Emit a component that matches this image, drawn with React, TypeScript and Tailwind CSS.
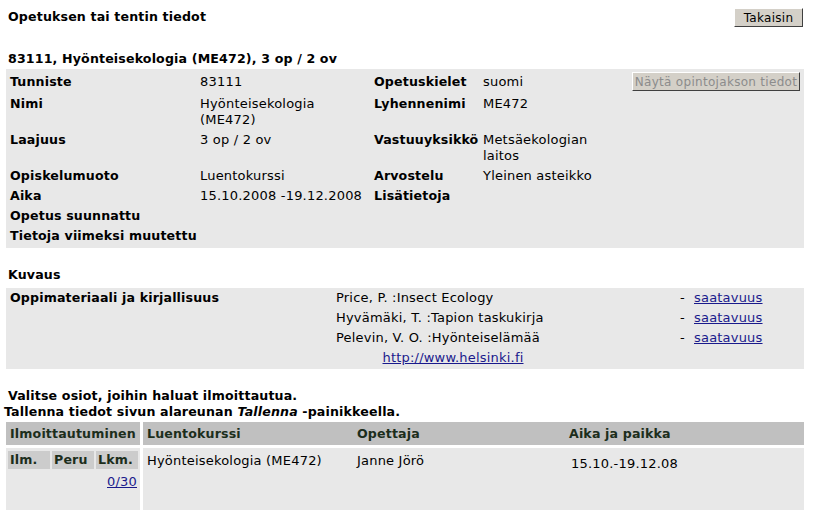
import type { ReactNode } from "react";

const font = { fontFamily: '"DejaVu Sans", Verdana, sans-serif' };

function Btn({ children, disabled }: { children: ReactNode; disabled?: boolean }) {
  return (
    <button
      className={
        "flex h-[19px] w-full items-center justify-center whitespace-nowrap border border-t-white border-l-white border-r-[#404040] border-b-[#404040] bg-[#d4d0c8] px-2 text-[12px] leading-none tracking-[0.3px] " +
        (disabled ? "text-[#8c8c8c]" : "text-black")
      }
      type="button"
    >
      {children}
    </button>
  );
}

const infoRows: { label: string; value: string; label2?: string; value2?: string; h: string }[] = [
  { label: "Nimi", value: "Hyönteisekologia (ME472)", label2: "Lyhennenimi", value2: "ME472", h: "h-[36px]" },
  { label: "Laajuus", value: "3 op / 2 ov", label2: "Vastuuyksikkö", value2: "Metsäekologian laitos", h: "h-[36px]" },
  { label: "Opiskelumuoto", value: "Luentokurssi", label2: "Arvostelu", value2: "Yleinen asteikko", h: "h-[20px]" },
  { label: "Aika", value: "15.10.2008 -19.12.2008", label2: "Lisätietoja", value2: "", h: "h-[20px]" },
  { label: "Opetus suunnattu", value: "", h: "h-[20px]" },
  { label: "Tietoja viimeksi muutettu", value: "", h: "h-[20px]" },
];

const books = [
  "Price, P. :Insect Ecology",
  "Hyvämäki, T. :Tapion taskukirja",
  "Pelevin, V. O. :Hyönteiselämää",
];

const bold = "font-bold text-[12.6px] tracking-[0.15px]";

export default function App() {
  return (
    <div className="min-h-[518px] w-[813px] bg-white text-[13px] leading-4 tracking-[0.2px] text-black" style={font}>
      {/* page title + back */}
      <div className="flex items-start justify-between pl-2 pr-[10px] pt-2">
        <h1 className={"pt-px " + bold}>Opetuksen tai tentin tiedot</h1>
        <div className="w-[69px]">
          <Btn>Takaisin</Btn>
        </div>
      </div>

      <h2 className={"mt-[24px] pl-2 " + bold}>83111, Hyönteisekologia (ME472), 3 op / 2 ov</h2>

      {/* basic info panel */}
      <div className="ml-[6px] mr-[9px] mt-[2px] bg-[#e8e8e8] pb-[2px] pl-1">
        <div className="grid h-[25px] grid-cols-[190px_174px_109px_149px_1fr] items-center">
          <span className={bold}>Tunniste</span>
          <span>83111</span>
          <span className={bold}>Opetuskielet</span>
          <span>suomi</span>
          <div className="w-[168px]">
            <Btn disabled>Näytä opintojakson tiedot</Btn>
          </div>
        </div>
        {infoRows.map((r) => (
          <div className={"grid grid-cols-[190px_174px_109px_149px_1fr] pt-[2px] " + r.h} key={r.label}>
            <span className={bold}>{r.label}</span>
            <span className="pr-1">{r.value}</span>
            <span className={bold}>{r.label2}</span>
            <span className="pr-2">{r.value2}</span>
            <span />
          </div>
        ))}
      </div>

      <h3 className={"mt-[19px] pl-2 " + bold}>Kuvaus</h3>

      {/* literature panel */}
      <div className="ml-[6px] mr-[9px] mt-[5px] grid grid-cols-[326px_234px_110px_14px_1fr] bg-[#e8e8e8] pb-px pl-1">
        <span className={"row-span-4 pt-[2px] " + bold}>Oppimateriaali ja kirjallisuus</span>
        {books.map((b) => (
          <div className="contents" key={b}>
            <span className="h-5 whitespace-nowrap pt-[2px]">{b}</span>
            <span />
            <span className="pt-[2px]">-</span>
            <a className="pt-[2px] text-[#1a1a8c] underline" href="#">
              saatavuus
            </a>
          </div>
        ))}
        <a className="h-5 pt-[2px] text-center text-[#1a1a8c] underline" href="#">
          http://www.helsinki.fi
        </a>
      </div>

      <p className={"mt-[19px] pl-2 " + bold}>Valitse osiot, joihin haluat ilmoittautua.</p>
      <p className={"pl-1 " + bold}>
        Tallenna tiedot sivun alareunan <i>Tallenna</i> -painikkeella.
      </p>

      {/* enrolment table */}
      <div className="ml-[6px] mr-[9px] mt-[2px] grid grid-cols-[134px_1fr] gap-[3px]">
        <div className={"flex h-[23px] items-center bg-[#c0c0c0] pl-[4px] text-[#1c2e1c] " + bold}>Ilmoittautuminen</div>
        <div className={"grid h-[23px] grid-cols-[210px_212px_1fr] items-center bg-[#c0c0c0] pl-1 text-[#1c2e1c] " + bold}>
          <span>Luentokurssi</span>
          <span>Opettaja</span>
          <span>Aika ja paikka</span>
        </div>
        <div className="h-[62px] bg-[#e8e8e8] pt-[3px]">
          <div className={"flex gap-[2px] pl-[2px] text-[#1c2e1c] " + bold}>
            <span className="flex h-[18px] w-[42px] items-center bg-[#cccccc] pl-[2px]">Ilm.</span>
            <span className="flex h-[18px] w-[42px] items-center bg-[#cccccc] pl-[2px]">Peru</span>
            <span className="flex h-[18px] w-[42px] items-center bg-[#cccccc] pl-[2px]">Lkm.</span>
          </div>
          <div className="mt-[5px] pr-[3px] text-right">
            <a className="text-[#1a1a8c] underline" href="#">
              0/30
            </a>
          </div>
        </div>
        <div className="grid h-[62px] grid-cols-[210px_212px_1fr] bg-[#e8e8e8] pl-1 pt-[5px]">
          <span>Hyönteisekologia (ME472)</span>
          <span>Janne Jörö</span>
          <span className="pl-[2px] pt-[3px]">15.10.-19.12.08</span>
        </div>
      </div>
    </div>
  );
}
